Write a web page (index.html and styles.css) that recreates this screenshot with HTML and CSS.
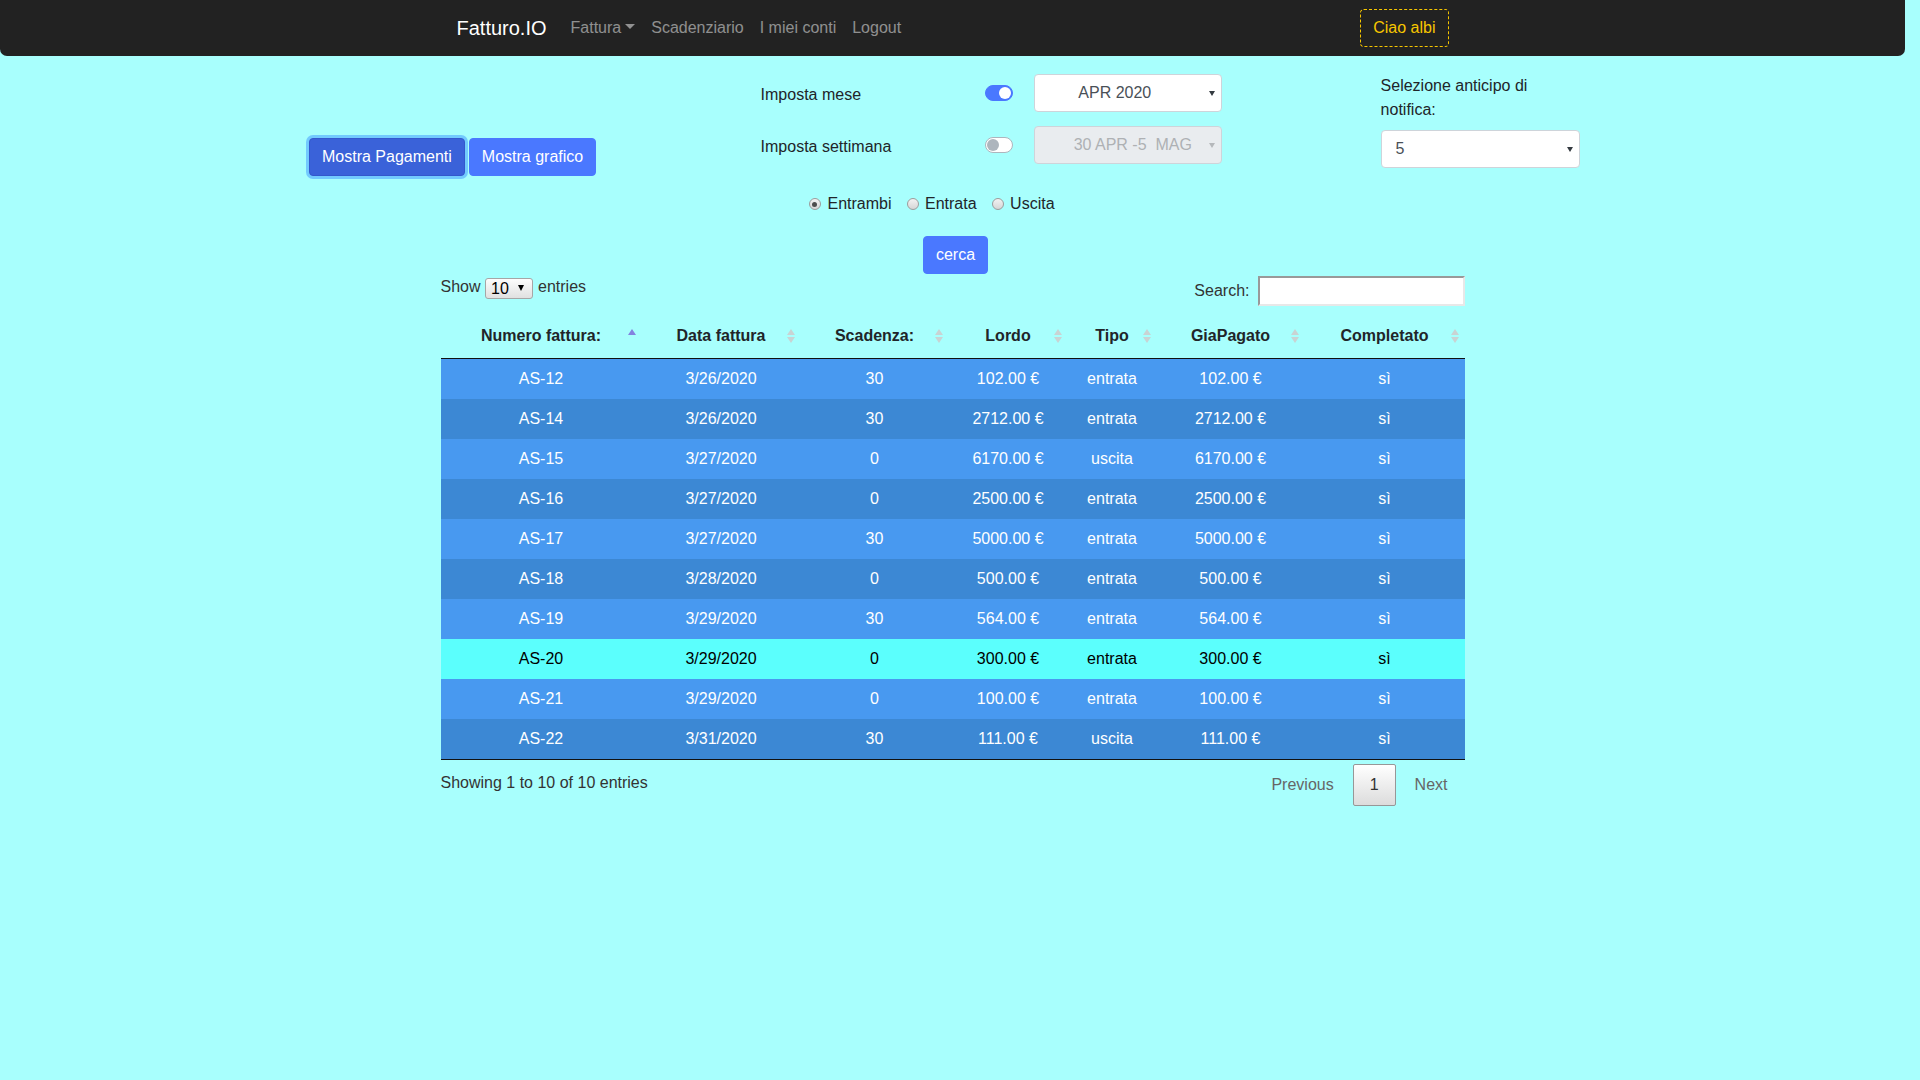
FILE: index.html
```html
<!DOCTYPE html>
<html lang="it">
<head>
<meta charset="utf-8">
<title>Fatturo.IO</title>
<link rel="stylesheet" href="styles.css">
</head>
<body>
<div class="page">
  <nav class="navbar">
    <div class="nav-inner">
      <div class="nav-left">
        <a class="brand" href="#">Fatturo.IO</a>
        <a class="nav-link dropdown" href="#">Fattura</a>
        <a class="nav-link" href="#">Scadenziario</a>
        <a class="nav-link" href="#">I miei conti</a>
        <a class="nav-link" href="#">Logout</a>
      </div>
      <button class="btn-ciao">Ciao albi</button>
    </div>
  </nav>

  <section class="controls">
    <div class="col-btns">
      <button class="btn btn-primary btn-focus">Mostra Pagamenti</button>
      <button class="btn btn-primary">Mostra grafico</button>
    </div>
    <div class="col-filters">
      <div class="filter-row">
        <span class="filter-label">Imposta mese</span>
        <span class="switch on"></span>
        <div class="sel sel-month">APR 2020<i class="caret"></i></div>
      </div>
      <div class="filter-row">
        <span class="filter-label">Imposta settimana</span>
        <span class="switch"></span>
        <div class="sel sel-week">30 APR -5&nbsp; MAG<i class="caret"></i></div>
      </div>
      <div class="radios">
        <label class="radio-item"><span class="radio checked"></span>Entrambi</label>
        <label class="radio-item"><span class="radio"></span>Entrata</label>
        <label class="radio-item"><span class="radio"></span>Uscita</label>
      </div>
    </div>
    <div class="col-notify">
      <label class="notify-label">Selezione anticipo di notifica:</label>
      <div class="sel sel-notify">5<i class="caret"></i></div>
    </div>
  </section>

  <div class="search-row">
    <button class="btn btn-primary">cerca</button>
  </div>

  <div class="dt-wrapper">
    <div class="dt-top">
      <div class="dt-length">
        <span>Show</span>
        <span class="len-sel">10<i class="caret caret-dark"></i></span>
        <span>entries</span>
      </div>
      <div class="dt-filter">
        <span>Search:</span>
        <input type="search" class="search-input">
      </div>
    </div>

    <table class="dt-table">
      <colgroup>
        <col class="c1"><col class="c2"><col class="c3"><col class="c4"><col class="c5"><col class="c6"><col class="c7">
      </colgroup>
      <thead>
        <tr>
          <th class="sort-asc">Numero fattura:</th>
          <th class="sorting">Data fattura</th>
          <th class="sorting">Scadenza:</th>
          <th class="sorting">Lordo</th>
          <th class="sorting">Tipo</th>
          <th class="sorting">GiaPagato</th>
          <th class="sorting">Completato</th>
        </tr>
      </thead>
      <tbody>
        <tr class="odd"><td>AS-12</td><td>3/26/2020</td><td>30</td><td>102.00 €</td><td>entrata</td><td>102.00 €</td><td>sì</td></tr>
        <tr class="even"><td>AS-14</td><td>3/26/2020</td><td>30</td><td>2712.00 €</td><td>entrata</td><td>2712.00 €</td><td>sì</td></tr>
        <tr class="odd"><td>AS-15</td><td>3/27/2020</td><td>0</td><td>6170.00 €</td><td>uscita</td><td>6170.00 €</td><td>sì</td></tr>
        <tr class="even"><td>AS-16</td><td>3/27/2020</td><td>0</td><td>2500.00 €</td><td>entrata</td><td>2500.00 €</td><td>sì</td></tr>
        <tr class="odd"><td>AS-17</td><td>3/27/2020</td><td>30</td><td>5000.00 €</td><td>entrata</td><td>5000.00 €</td><td>sì</td></tr>
        <tr class="even"><td>AS-18</td><td>3/28/2020</td><td>0</td><td>500.00 €</td><td>entrata</td><td>500.00 €</td><td>sì</td></tr>
        <tr class="odd"><td>AS-19</td><td>3/29/2020</td><td>30</td><td>564.00 €</td><td>entrata</td><td>564.00 €</td><td>sì</td></tr>
        <tr class="hl"><td>AS-20</td><td>3/29/2020</td><td>0</td><td>300.00 €</td><td>entrata</td><td>300.00 €</td><td>sì</td></tr>
        <tr class="odd"><td>AS-21</td><td>3/29/2020</td><td>0</td><td>100.00 €</td><td>entrata</td><td>100.00 €</td><td>sì</td></tr>
        <tr class="even"><td>AS-22</td><td>3/31/2020</td><td>30</td><td>111.00 €</td><td>uscita</td><td>111.00 €</td><td>sì</td></tr>
      </tbody>
    </table>

    <div class="dt-bottom">
      <div class="dt-info">Showing 1 to 10 of 10 entries</div>
      <div class="dt-paginate">
        <a class="pg disabled">Previous</a>
        <a class="pg current">1</a>
        <a class="pg disabled">Next</a>
      </div>
    </div>
  </div>
</div>
</body>
</html>
```

FILE: styles.css
```css
* { box-sizing: border-box; }
html, body { margin: 0; padding: 0; }
body {
  background: #a8fffd;
  font-family: "Liberation Sans", Arial, sans-serif;
  font-size: 16px;
  line-height: 1.5;
  color: #212529;
}
.page { width: 1905px; min-height: 1080px; }

/* navbar */
.navbar {
  background: #222;
  height: 56px;
  padding: 8px 0;
  border-radius: 0 0 7px 7px;
}
.nav-inner {
  width: 992px;
  height: 40px;
  margin: 0 auto;
  display: flex;
  align-items: center;
  justify-content: space-between;
}
.nav-left { display: flex; align-items: center; }
.brand {
  color: #fff;
  font-size: 20px;
  line-height: 30px;
  padding: 5px 0;
  margin-right: 16px;
  text-decoration: none;
}
.nav-link {
  color: rgba(255,255,255,.5);
  padding: 8px;
  line-height: 24px;
  text-decoration: none;
}
.dropdown::after {
  content: "";
  display: inline-block;
  margin-left: 4px;
  vertical-align: 4px;
  border-top: 5px solid;
  border-left: 5px solid transparent;
  border-right: 5px solid transparent;
}
.btn-ciao {
  font: inherit;
  line-height: 24px;
  height: 38px;
  padding: 6px 12px;
  color: #f7c600;
  background: transparent;
  border: 1px dashed #f7c600;
  border-radius: 4px;
}

/* buttons */
.btn {
  font: inherit;
  line-height: 24px;
  padding: 6px 12px;
  border: 1px solid transparent;
  border-radius: 4px;
  color: #fff;
  cursor: pointer;
}
.btn-primary { background: #4a78ff; border-color: #4a78ff; }
.btn-focus {
  background: #3a62d9;
  border-color: #3358cc;
  box-shadow: 0 0 0 3px rgba(60,150,255,.5);
}

/* top controls */
.controls { display: flex; padding-left: 309px; }
.col-btns {
  width: 451.6px;
  padding-top: 82px;
  display: flex;
  align-items: flex-start;
  gap: 4px;
}
.col-filters { width: 620px; padding-top: 18px; }
.filter-row { display: flex; align-items: center; height: 38px; }
.filter-row + .filter-row { margin-top: 14px; }
.filter-label { width: 224.4px; padding-top: 3px; }

.switch {
  position: relative;
  width: 28px;
  height: 16px;
  border-radius: 8px;
  border: 1px solid #adb5bd;
  background: #fff;
  margin-right: 20.6px;
}
.switch::after {
  content: "";
  position: absolute;
  top: 1px;
  left: 1px;
  width: 12px;
  height: 12px;
  border-radius: 50%;
  background: #adb5bd;
}
.switch.on { background: #4a78ff; border-color: #4a78ff; }
.switch.on::after { left: 13px; background: #fff; }

.sel {
  position: relative;
  height: 38px;
  border: 1px solid #ced4da;
  border-radius: 4px;
  background: #fff;
  display: flex;
  align-items: center;
  color: #495057;
}
.sel-month { width: 188.4px; justify-content: center; padding-right: 26px; }
.sel-week {
  width: 188.4px;
  justify-content: center;
  padding-left: 10px;
  background: #e9ecef;
  color: #aeb1b4;
}
.caret {
  position: absolute;
  right: 6px;
  top: 50%;
  margin-top: -2px;
  border-top: 5px solid #343a40;
  border-left: 3px solid transparent;
  border-right: 3px solid transparent;
}
.sel-week .caret { border-top-color: #b5b8bb; }

.radios {
  display: flex;
  align-items: center;
  height: 24px;
  margin-top: 28px;
  padding-left: 48.4px;
}
.radio-item { display: flex; align-items: center; margin-right: 15px; }
.radio {
  position: relative;
  width: 12px;
  height: 12px;
  margin-right: 6.5px;
  border-radius: 50%;
  border: 1px solid #9c9c9c;
  background: linear-gradient(#f2f2f2, #d6d6d6);
}
.radio.checked::after {
  content: "";
  position: absolute;
  top: 2.5px;
  left: 2.5px;
  width: 5px;
  height: 5px;
  border-radius: 50%;
  background: #4d4d4d;
}

.col-notify { width: 199px; padding-top: 17.7px; }
.notify-label { display: block; margin-bottom: 8px; }
.sel-notify { width: 199px; padding-left: 14px; }

.search-row {
  display: flex;
  justify-content: center;
  padding-left: 6px;
  margin-top: 20px;
}

/* datatable */
.dt-wrapper { width: 1024px; margin: 1px auto 0; color: #333; }
.dt-top { display: flex; justify-content: space-between; align-items: flex-start; }
.dt-length { display: flex; align-items: center; height: 24px; }
.len-sel {
  position: relative;
  display: flex;
  align-items: center;
  width: 48px;
  height: 21px;
  margin: 2px 5px 0 4.5px;
  padding-left: 5px;
  border: 1px solid #a6a6a6;
  border-radius: 3px;
  background: linear-gradient(#fdfdfd, #e0e0e0);
  color: #000;
  line-height: 19px;
}
.len-sel .caret {
  right: 8px;
  margin-top: -3px;
  border-top: 6px solid #000;
  border-left-width: 3.5px;
  border-right-width: 3.5px;
}
.dt-filter { display: flex; align-items: center; height: 30px; margin-top: 1px; }
.search-input {
  width: 207px;
  height: 30px;
  margin: 0 0 0 8px;
  padding: 1px 2px;
  font: inherit;
  background: #fff;
  border: 2px solid;
  border-color: #999 #e8e8e8 #e8e8e8 #999;
}

.dt-table {
  width: 1024px;
  margin-top: 8px;
  table-layout: fixed;
  border-collapse: separate;
  border-spacing: 0;
  border-bottom: 1px solid #111;
}
.c1 { width: 201px; }
.c2 { width: 159px; }
.c3 { width: 148px; }
.c4 { width: 119px; }
.c5 { width: 89px; }
.c6 { width: 148px; }
.c7 { width: 160px; }
.dt-table th {
  position: relative;
  height: 45px;
  padding: 10px;
  font-weight: bold;
  color: #212529;
  text-align: center;
  border-bottom: 1px solid #111;
}
.dt-table th::before,
.dt-table th::after {
  content: "";
  position: absolute;
  right: 6px;
  border-left: 4px solid transparent;
  border-right: 4px solid transparent;
}
.dt-table th.sorting::before {
  top: 15px;
  border-bottom: 6px solid #c9d3d3;
}
.dt-table th.sorting::after {
  top: 23px;
  border-top: 6px solid #c9d3d3;
}
.dt-table th.sort-asc::before {
  top: 15px;
  border-bottom: 6px solid #8383df;
}
.dt-table th.sort-asc::after { display: none; }

.dt-table td {
  height: 40px;
  padding: 8px 10px;
  text-align: center;
  color: #fff;
  white-space: nowrap;
}
.dt-table tr.odd td { background: #4899f0; }
.dt-table tr.even td { background: #3c88d4; }
.dt-table tr.hl td { background: #5bfffd; color: #000; }

.dt-bottom { display: flex; justify-content: space-between; align-items: flex-start; }
.dt-info { padding-top: 11px; line-height: 24px; }
.dt-paginate { display: flex; padding-top: 4px; }
.pg {
  display: inline-block;
  min-width: 24px;
  padding: 8px 16px;
  margin-left: 2px;
  line-height: 24px;
  border: 1px solid transparent;
  border-radius: 2px;
  color: #666;
  text-align: center;
  cursor: default;
}
.pg.current {
  color: #333;
  border-color: #979797;
  background: linear-gradient(#fff, #dcdcdc);
}
```
